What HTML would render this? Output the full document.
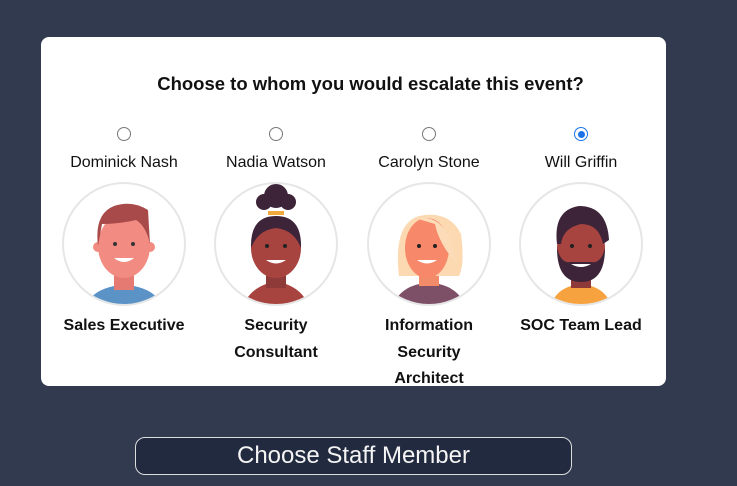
<!DOCTYPE html>
<html><head><style>
body{margin:0;width:737px;height:486px;background:#323a4f;font-family:"Liberation Sans","DejaVu Sans",sans-serif;position:relative;overflow:hidden}
.card{position:absolute;left:41px;top:37px;width:625px;height:349px;background:#fff;border-radius:8px}
h1{position:absolute;left:0;width:100%;top:73px;margin:0;text-align:center;font-size:18.5px;font-weight:bold;color:#111;padding-left:2px}
.col{position:absolute;top:126px;width:152px;text-align:center}
.radio{width:12px;height:12px;border:1.5px solid #777;border-radius:50%;margin:1px auto 0;box-sizing:content-box}
.radio.on{border-color:#1a73e8;position:relative}
.radio.on::after{content:"";position:absolute;left:2.5px;top:2.5px;width:7px;height:7px;border-radius:50%;background:#1a73e8}
.name{font-size:16px;color:#111;margin-top:13px;height:20px}
.av{width:120px;height:120px;border:2px solid #e6e6e6;border-radius:50%;margin:8px auto 0;overflow:hidden;position:relative}
.t{font-size:16px;font-weight:bold;color:#111;line-height:26.5px;margin-top:7px}
.btn{position:absolute;left:135px;top:437px;width:435px;height:36px;border:1px solid #ddd;border-radius:10px;background:#222a40;color:#f4f4f4;font-size:24px;text-align:center;line-height:36px}
</style></head><body>
<div class="card"></div>
<h1>Choose to whom you would escalate this event?</h1>

<div class="col" style="left:48px">
<div class="radio"></div><div class="name">Dominick Nash</div>
<div class="av"><svg width="120" height="120" viewBox="0 0 120 120">
<path d="M22 120 Q30 106 50 102 L70 102 Q90 106 98 120Z" fill="#5b93c7"/>
<rect x="50" y="80" width="20" height="26" fill="#e57a72"/>
<ellipse cx="60" cy="62" rx="26" ry="32" fill="#f28b82"/>
<circle cx="34" cy="63" r="5" fill="#f28b82"/><circle cx="86" cy="63" r="5" fill="#f28b82"/>
<path d="M34 62 Q30 30 50 22 Q68 16 84 26 L86 60 Q82 42 72 36 Q55 40 38 40 Z" fill="#a84a4a"/>
<circle cx="51" cy="60" r="2" fill="#333"/><circle cx="69" cy="60" r="2" fill="#333"/>
<path d="M50 74 Q60 82 70 74Z" fill="#fff"/></svg></div>
<div class="t">Sales Executive</div></div>

<div class="col" style="left:200px">
<div class="radio"></div><div class="name">Nadia Watson</div>
<div class="av"><svg width="120" height="120" viewBox="0 0 120 120">
<path d="M28 120 Q34 106 50 100 L70 100 Q86 106 92 120Z" fill="#a8443f"/>
<rect x="50" y="80" width="20" height="24" fill="#8e3a38"/>
<circle cx="60" cy="12" r="12" fill="#3d2438"/><circle cx="48" cy="18" r="8" fill="#3d2438"/><circle cx="72" cy="18" r="8" fill="#3d2438"/>
<rect x="52" y="27" width="16" height="4" fill="#f0a93a"/>
<ellipse cx="60" cy="64" rx="25" ry="30" fill="#a8443f"/>
<path d="M35 64 Q34 32 60 32 Q86 32 85 64 Q78 46 60 44 Q42 46 35 64Z" fill="#3d2438"/>
<circle cx="51" cy="62" r="2" fill="#222"/><circle cx="69" cy="62" r="2" fill="#222"/>
<path d="M50 76 Q60 83 70 76Z" fill="#fff"/></svg></div>
<div class="t">Security<br>Consultant</div></div>

<div class="col" style="left:353px">
<div class="radio"></div><div class="name">Carolyn Stone</div>
<div class="av"><svg width="120" height="120" viewBox="0 0 120 120">
<path d="M24 120 Q32 104 50 100 L70 100 Q88 104 96 120Z" fill="#7d5068"/>
<rect x="50" y="80" width="20" height="22" fill="#f28b6a"/>
<path d="M30 92 Q24 40 50 32 Q80 26 92 50 Q96 80 90 92Z" fill="#fcd9b0"/>
<ellipse cx="58" cy="64" rx="22" ry="30" fill="#f7896a"/>
<path d="M46 34 Q72 30 82 58 L88 80 Q70 60 66 40Z" fill="#fcdcb8"/>
<circle cx="50" cy="62" r="2" fill="#222"/><circle cx="66" cy="62" r="2" fill="#222"/>
<path d="M48 76 Q58 83 68 76Z" fill="#fff"/></svg></div>
<div class="t">Information<br>Security<br>Architect</div></div>

<div class="col" style="left:505px">
<div class="radio on"></div><div class="name">Will Griffin</div>
<div class="av"><svg width="120" height="120" viewBox="0 0 120 120">
<path d="M30 120 Q36 106 50 102 L70 102 Q84 106 90 120Z" fill="#f5a23f"/>
<rect x="50" y="84" width="20" height="20" fill="#8e3a38"/>
<ellipse cx="60" cy="64" rx="24" ry="30" fill="#a8443f"/>
<path d="M36 60 Q32 26 58 22 Q86 22 88 56 L82 60 Q78 40 60 40 Q42 44 40 60Z" fill="#3d2438"/>
<path d="M36 64 Q36 98 60 98 Q84 98 84 64 Q80 80 70 78 L50 78 Q40 80 36 64Z" fill="#3d2438"/>
<circle cx="51" cy="62" r="2" fill="#222"/><circle cx="69" cy="62" r="2" fill="#222"/>
<path d="M50 80 Q60 86 70 80Z" fill="#fff"/></svg></div>
<div class="t">SOC Team Lead</div></div>

<div class="btn">Choose Staff Member</div>
</body></html>
